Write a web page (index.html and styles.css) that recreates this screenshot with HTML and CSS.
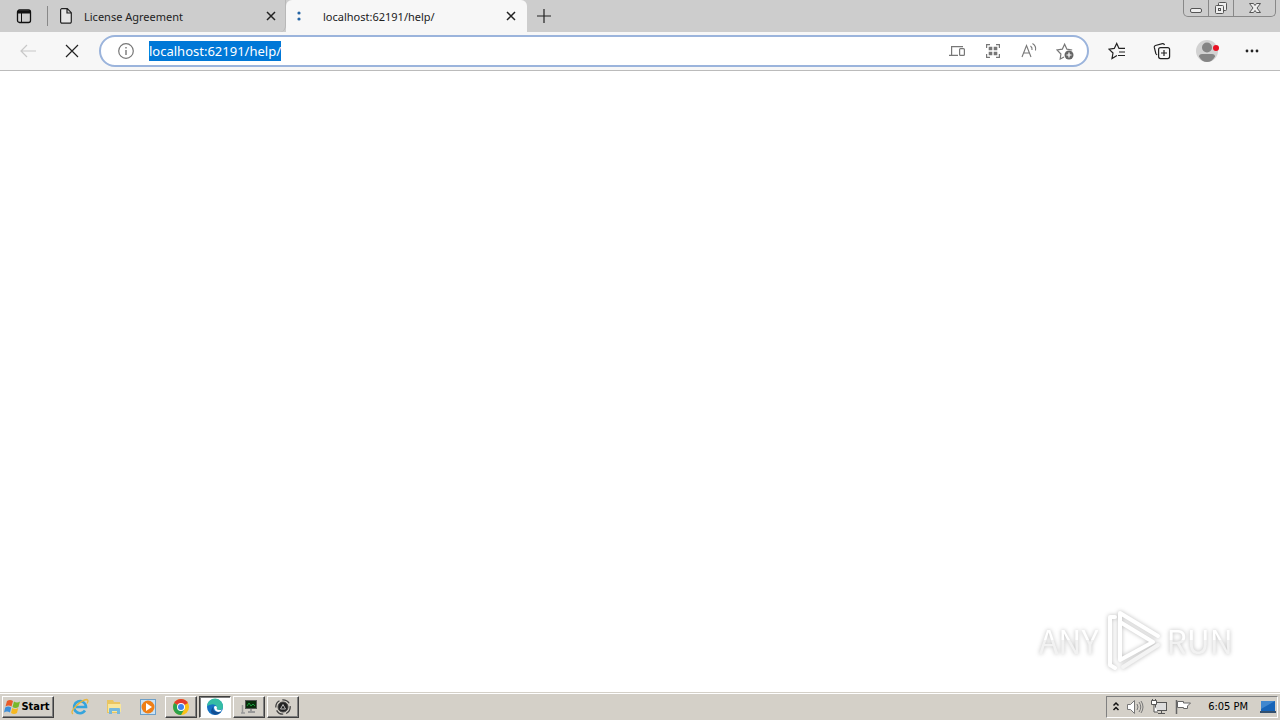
FILE: index.html
```html
<!DOCTYPE html>
<html lang="en">
<head>
    <meta charset="UTF-8">
    <meta name="viewport" content="width=device-width, initial-scale=1.0">
    <title>localhost:62191/help/</title>
    <link rel="stylesheet" href="styles.css">
</head>
<body>
    <header class="tab-strip">
        <button class="tab-menu" aria-label="Tab actions">
            <svg width="16" height="16" viewBox="0 0 16 16" fill="none" stroke="#111"><rect x="1.5" y="2" width="13" height="12.5" rx="2" stroke-width="1.3"/><path d="M2 4h12" stroke-width="3"/><path d="M5.5 5v9" stroke-width="1"/></svg>
        </button>
        <div class="tab">
            <svg width="12" height="16" viewBox="0 0 12 16" fill="#e6e6e6" stroke="#222" stroke-width="1.2"><path d="M1.5.7h5.8l4 4v9.1a1.4 1.4 0 0 1-1.4 1.4H2a1.4 1.4 0 0 1-1.4-1.4V2A1.4 1.4 0 0 1 1.5.7zM7 .8v4.200h4.200"/></svg>
            <a class="tab-title" href="#">License Agreement</a>
            <button class="tab-close" aria-label="Close License Agreement"><svg width="10" height="10" viewBox="0 0 10 10" stroke="#222" stroke-width="1.5"><path d="M1 1l8 8M9 1L1 9"/></svg></button>
        </div>
        <div class="tab tab-active">
            <svg width="12" height="16" viewBox="0 0 12 16" fill="#2565a5"><circle cx="2" cy="5" r="1.6"/><circle cx="2" cy="11" r="1.6"/></svg>
            <a class="tab-title" href="#">localhost:62191/help/</a>
            <button class="tab-close" aria-label="Close localhost"><svg width="10" height="10" viewBox="0 0 10 10" stroke="#222" stroke-width="1.5"><path d="M1 1l8 8M9 1L1 9"/></svg></button>
        </div>
        <button class="new-tab" aria-label="New tab"><svg width="14" height="14" viewBox="0 0 14 14" stroke="#222" stroke-width="1.2"><path d="M7 0v14M0 7h14"/></svg></button>
        <div class="window-buttons">
            <button aria-label="Minimize"><svg width="14" height="14" viewBox="0 0 14 14" fill="#eee" stroke="#555"><rect x="1.5" y="7.5" width="11" height="4" rx="1.5"/></svg></button>
            <button aria-label="Restore"><svg width="14" height="14" viewBox="0 0 14 14" fill="#eee" stroke="#555"><rect x="4.5" y="1.5" width="8" height="8" rx="1"/><rect x="1.5" y="4.5" width="8" height="8" rx="1"/><rect x="4.5" y="7.5" width="2" height="2"/></svg></button>
            <button class="window-close" aria-label="Close"><svg width="14" height="14" viewBox="0 0 14 14" fill="#eee" stroke="#555"><path d="M1.5 2.5h4L7 4.500l1.500-2h4L9 7l3.500 4.500h-4L7 9.500l-1.500 2h-4L5 7z"/></svg></button>
        </div>
    </header>

    <nav class="toolbar">
        <button class="nav-button" aria-label="Back"><svg width="16" height="14" viewBox="0 0 16 14" fill="none" stroke="#c8c8c8" stroke-width="1.2"><path d="M16 7H1M7 1L1 7l6 6"/></svg></button>
        <button class="nav-button" aria-label="Stop"><svg width="14" height="14" viewBox="0 0 14 14" stroke="#222" stroke-width="1.2"><path d="M1 1l12 12M13 1L1 13"/></svg></button>
        <form class="address-bar">
            <label for="address" aria-label="Address">
                <svg width="18" height="18" viewBox="0 0 18 18" fill="none" stroke="#777"><circle cx="9" cy="9" r="7.3" stroke-width="1.2"/><path d="M9 8v5M9 5v1.500" stroke-width="1.4"/></svg>
            </label>
            <input type="text" id="address" value="localhost:62191/help/" spellcheck="false" autocomplete="off">
            <button type="button" aria-label="Send to devices"><svg width="18" height="18" viewBox="0 0 18 18" fill="none" stroke="#777" stroke-width="1.2"><path d="M15 4.600H3.600v8.400M1 13.400h9"/><rect x="11.6" y="6.600" width="4.8" height="6.8" rx="1"/></svg></button>
            <button type="button" aria-label="QR code"><svg width="18" height="18" viewBox="0 0 18 18" fill="none" stroke="#777" stroke-width="1.2"><path d="M2.600 6V2.600H6M12 2.600h3.400V6M15.400 12v3.400H12M6 15.400H2.600V12"/><path d="M5.500 5.500h2v2h-2zM10.500 5.500h2v2h-2zM5.500 10.500h2v2h-2zM10.500 10.500h2v2h-2z" fill="#777" stroke-width="1.6"/></svg></button>
            <button type="button" aria-label="Read aloud"><svg width="18" height="18" viewBox="0 0 18 18" fill="none" stroke="#777" stroke-width="1.1"><path d="M2 15L6.500 3.500 11 15M3.500 11h6M10.500 4q2 1.500 1.500 4M12.500 1.500q4 2.500 3 7"/></svg></button>
            <button type="button" aria-label="Add to favorites"><svg width="18" height="18" viewBox="0 0 18 18" fill="none" stroke="#777" stroke-width="1.2"><path d="M8 15l-3.800 2 .7-5L1 8l5.300-.8L8.600 2.200l2.300 5 5.300.8"/><circle cx="13" cy="13" r="4.5" fill="#666" stroke="none"/><path d="M13 10.500v5M10.500 13h5" stroke="#fff"/></svg></button>
        </form>
        <div class="browser-actions">
            <button aria-label="Favorites"><svg width="18" height="18" viewBox="0 0 18 18" fill="none" stroke="#222" stroke-width="1.2"><path d="M9 13.500L4 16.500l1-5.500L1 7.200l5.300-.8L8.700 1.500l2.300 4.900h6M11 10h6M10 13.500h7"/></svg></button>
            <button aria-label="Collections"><svg width="18" height="18" viewBox="0 0 18 18" fill="none" stroke="#222" stroke-width="1.2"><path d="M4 13L2.800 11.500 1.300 5.400Q1 4 2.400 3.500L9.500 1.700Q11 1.400 11.500 3"/><rect x="5.600" y="5.600" width="11" height="11" rx="2"/><path d="M11 8v6M8 11h6"/></svg></button>
            <button aria-label="Profile"><svg width="24" height="24" viewBox="0 0 24 24"><circle cx="12" cy="12" r="11" fill="#d2d2d2"/><circle cx="12" cy="8.500" r="5" fill="#858585"/><path d="M4 17.500Q4 15 7 15h10q3 0 3 2.500Q17 23 12 23T4 17.500z" fill="#858585"/><circle cx="21" cy="9" r="3" fill="#e81123"/></svg></button>
            <button aria-label="Settings and more"><svg width="16" height="16" viewBox="0 0 16 16" fill="#222"><circle cx="3" cy="8" r="1.4"/><circle cx="8" cy="8" r="1.4"/><circle cx="13" cy="8" r="1.4"/></svg></button>
        </div>
    </nav>

    <main class="page">
        <div class="watermark">
            <span>ANY</span>
            <svg width="62" height="68" viewBox="0 0 62 68" fill="none" stroke="#fff" stroke-width="4" stroke-linejoin="round" stroke-linecap="round">
                <path d="M22 61l35-22" stroke="#f4f4f4"/>
                <path d="M14 11H9v48l5 3" />
                <path d="M19 47V7l38 23M19 16l33 20M19 16v38l33-18"/>
            </svg>
            <span>RUN</span>
        </div>
    </main>

    <footer class="taskbar">
        <button class="start">
            <svg width="17" height="16" viewBox="0 0 17 16"><path d="M3 2q3-2 6 0L7.500 7.500q-3-2-6 0z" fill="#e95b28"/><path d="M10 2.500q3 2 6 0L14.500 8q-3 2-6 0z" fill="#78b82a"/><path d="M1.200 8.500q3-2 6 0L6 13.500q-3-2-6 0z" fill="#3d8fd9"/><path d="M8.200 9q3 2 6 0L13 14q-3 2-6 0z" fill="#f6b820"/></svg>
            Start
        </button>
        <div class="launchers">
            <button aria-label="Internet Explorer"><svg width="18" height="18" viewBox="0 0 18 18" fill="none"><path d="M14 12.500A6 6 0 1 1 15 9H5" stroke="#35a4dc" stroke-width="2.600"/><path d="M2 16q-3-2 3-8T16 1.500q2 1 0 4" stroke="#e9b63b" stroke-width="1.3"/></svg></button>
            <button aria-label="Explorer"><svg width="18" height="18" viewBox="0 0 18 18"><path d="M2 2h6l1 2h6v11H2z" fill="#e9c561"/><path d="M3 6h13v8H3z" fill="#f8e69b"/><path d="M4 16v-5q0-1 1-1h9q1 0 1 1v5h-3v-3H7v3z" fill="#75b8dc"/></svg></button>
            <button aria-label="Media Player"><svg width="18" height="18" viewBox="0 0 18 18"><rect x="1.5" y="1.5" width="15" height="15" fill="#c9e2f5" stroke="#6c9fc8"/><circle cx="9" cy="9" r="6.5" fill="#ef7f16"/><path d="M7 5l6 4-6 4z" fill="#fff"/></svg></button>
        </div>
        <div class="windows">
            <button aria-label="Chrome"><svg width="18" height="18" viewBox="0 0 18 18"><circle cx="9" cy="9" r="8" fill="#fbc116"/><path d="M9 9L2.100 5A8 8 0 0 1 15.900 5z" fill="#e33b2e"/><path d="M9 9L2.100 5A8 8 0 0 0 9 17l3.500-6z" fill="#2ba24c"/><circle cx="9" cy="9" r="4" fill="#fff"/><circle cx="9" cy="9" r="3" fill="#3f82ed"/></svg></button>
            <button class="pressed" aria-label="Edge"><svg width="18" height="18" viewBox="0 0 18 18"><circle cx="9" cy="9" r="8" fill="#1673c4"/><path d="M1 8a8 8 0 0 1 16 1q0 3-4 3-3 0-2-3Q9 4 1 8z" fill="#35bda5"/><path d="M7 9q-1 6 8 5-4 4-8 2T7 9z" fill="#124e93"/><path d="M8 9q1-2 3 0-1 3 2 3 2 0 3-.5Q15 14 12 14 8 13 8 9z" fill="#fff"/></svg></button>
            <button aria-label="System monitor"><svg width="18" height="18" viewBox="0 0 18 18"><rect x="5.5" y="2.5" width="11" height="8" fill="#072b0b" stroke="#555"/><path d="M7 8l2-3 2 3 2-2 2 2" fill="none" stroke="#1b9b3c"/><path d="M8 14h7M11 11v3" stroke="#999" stroke-width="2"/><path d="M2.500 7v8M1 15h4" stroke="#999" stroke-width="1.5"/></svg></button>
            <button aria-label="Process tool"><svg width="18" height="18" viewBox="0 0 18 18" fill="none" stroke="#444"><circle cx="9" cy="9" r="5" fill="#222"/><circle cx="9" cy="9" r="7.2" stroke-width="1.3" stroke-dasharray="8 3"/><path d="M6.500 11L9 6.500l2.500 4.500z" stroke="#bbb"/></svg></button>
        </div>
        <div class="tray">
            <button aria-label="Show hidden icons"><svg width="8" height="12" viewBox="0 0 8 12" fill="none" stroke="#111" stroke-width="1.5"><path d="M1.500 4.500L4 2l2.500 2.500M1.500 9L4 6.500 6.500 9"/></svg></button>
            <button aria-label="Volume"><svg width="18" height="18" viewBox="0 0 18 18" fill="#fff" stroke="#777"><path d="M1.500 6.500h3l4-4v13l-4-4h-3z"/><path d="M11 6q2 3 0 6M13 4q3.500 5 0 10M15 3q4 6 0 12" fill="none"/></svg></button>
            <button aria-label="Network"><svg width="18" height="18" viewBox="0 0 18 18" fill="#ddd" stroke="#555"><rect x="5.500" y="4.500" width="11" height="8"/><path d="M8 15.500h7M11.500 13v2"/><path d="M1.500 2.500h5v4h-5zM4 7v7h4" fill="#fff"/><path d="M2.500 1v2M5.500 1v2"/></svg></button>
            <button aria-label="Action Center"><svg width="18" height="18" viewBox="0 0 18 18" fill="#fff" stroke="#666"><path d="M2.500 2v14" stroke-width="1.5"/><path d="M3.500 3.500h6v1.500h7l-3 3 0 2.500h-4V9.500h-6z"/></svg></button>
            <time>6:05 PM</time>
            <button aria-label="Show desktop"><svg width="18" height="16" viewBox="0 0 18 16"><path d="M2 2h14v10H2z" fill="#1664b8"/><path d="M2 2h14L2 10z" fill="#3f87cf"/><path d="M1 13h16" stroke="#34506e" stroke-width="2"/></svg></button>
        </div>
    </footer>

    <script>
        // Start with the whole address selected, ready to be typed over
        const address = document.getElementById('address');
        address.focus();
        address.select();
    </script>
</body>
</html>
```
FILE: styles.css
```css
* {
    box-sizing: border-box;
}
body {
    margin: 0;
    min-height: 100vh;
    display: flex;
    flex-direction: column;
    background-color: #fff;
    font-family: "Noto Sans", sans-serif;
    font-size: 11px;
    color: #222;
}
button {
    display: flex;
    align-items: center;
    justify-content: center;
    padding: 0;
    border: 0;
    background: none;
    font: inherit;
    color: inherit;
}
svg {
    display: block;
    flex-shrink: 0;
}
.tab-strip {
    display: flex;
    height: 32px;
    background-color: #cdcdcd;
}
.tab-menu {
    width: 48px;
    margin: 6px 0;
    border-right: 1px solid #888;
}
.tab {
    display: flex;
    align-items: center;
    width: 238px;
    padding: 0 8px 0 12px;
    border-right: 1px solid #b8b8b8;
    border-radius: 0 0 6px 0;
}
.tab-title {
    flex: 1;
    padding-left: 12px;
    color: #222;
    text-decoration: none;
}
.tab-close {
    width: 12px;
    height: 20px;
}
.tab-active {
    width: 241px;
    padding: 0 10px 0 11px;
    border: 0;
    border-radius: 6px 6px 0 0;
    background-color: #f7f7f7;
}
.tab-active .tab-title {
    padding-left: 14px;
}
.new-tab {
    width: 34px;
}
.window-buttons {
    display: flex;
    height: 17px;
    margin: 0 4px 0 auto;
    border: 1px solid #888;
    border-top: 0;
    border-radius: 0 0 5px 5px;
}
.window-buttons button {
    width: 25px;
    border-right: 1px solid #888;
}
.window-buttons .window-close {
    width: 41px;
    border-right: 0;
}
.toolbar {
    display: flex;
    align-items: center;
    height: 39px;
    padding: 0 6px;
    border-bottom: 1px solid #bbb;
    background-color: #f7f7f7;
}
.nav-button {
    width: 44px;
    height: 32px;
}
.address-bar {
    display: flex;
    flex: 1;
    align-items: center;
    height: 32px;
    margin-left: 5px;
    padding: 0 13px 0 16px;
    border: 2px solid #9bb4dc;
    border-radius: 16px;
    background-color: #fff;
}
.address-bar input {
    flex: 1;
    min-width: 0;
    height: 20px;
    margin-left: 14px;
    padding: 0;
    border: 0;
    outline: 0;
    background: none;
    font: 13px/20px "Noto Sans", sans-serif;
    caret-color: transparent;
}
.address-bar input::selection {
    background-color: #0078d7;
    color: #fff;
}
.address-bar button {
    width: 18px;
    margin-left: 18px;
}
.browser-actions {
    display: flex;
    align-items: center;
    margin-left: 5px;
}
.browser-actions button {
    width: 45px;
    height: 32px;
}
.page {
    display: flex;
    flex: 1;
    align-items: flex-end;
    justify-content: flex-end;
    padding: 0 47px 18px 0;
}
.watermark {
    display: flex;
    align-items: center;
    gap: 3px;
    font-family: "Noto Sans CJK SC", sans-serif;
    font-size: 32px;
    line-height: 40px;
    filter: drop-shadow(0 0 2px #bbb);
}
.watermark span {
    background: linear-gradient(#fff 50%, #f2f2f2 50%);
    background-clip: text;
    -webkit-background-clip: text;
    color: transparent;
}
.taskbar {
    display: flex;
    align-items: center;
    height: 28px;
    padding: 2px;
    border-top: 1px solid #d4d0c8;
    background-color: #d4d0c8;
    box-shadow: inset 0 1px #fff;
    font: 11px "DejaVu Sans Condensed", "DejaVu Sans", sans-serif;
    color: #000;
}
.start,
.windows button {
    height: 22px;
    border: 1px solid;
    border-color: #fff #404040 #404040 #fff;
    box-shadow: inset -1px -1px #808080;
}
.start {
    width: 52px;
    padding-right: 2px;
    font-weight: bold;
}
.launchers {
    display: flex;
    margin-left: 9px;
}
.launchers button {
    width: 34px;
}
.windows {
    display: flex;
    gap: 2px;
}
.windows button {
    width: 32px;
}
.windows .pressed {
    border-color: #404040 #fff #fff #404040;
    background-color: #fff;
    box-shadow: inset 1px 1px #808080;
}
.tray {
    display: flex;
    align-items: center;
    gap: 6px;
    height: 22px;
    margin-left: auto;
    padding-left: 5px;
    border: 1px solid;
    border-color: #808080 #fff #fff #808080;
}
.tray time {
    margin: 0 5px 0 10px;
}
```
